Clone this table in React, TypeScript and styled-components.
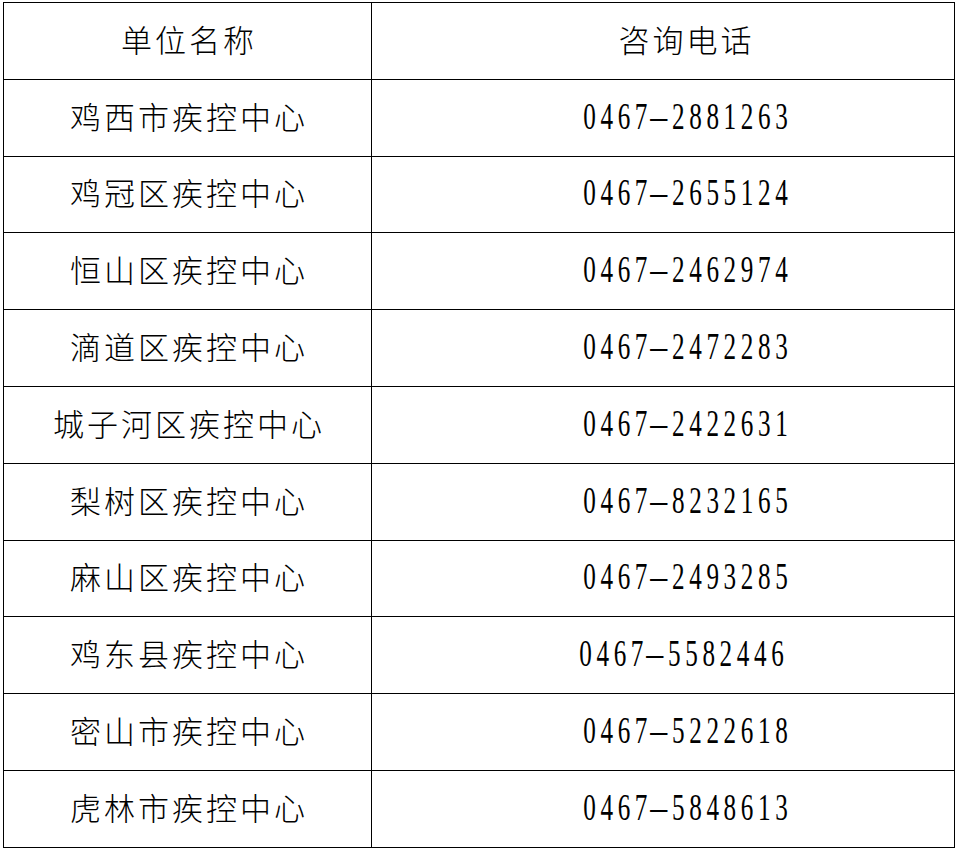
import styled, { createGlobalStyle } from "styled-components";

const GlobalStyle = createGlobalStyle`
  html, body {
    margin: 0;
    padding: 0;
    background: #ffffff;
  }
`;

const Page = styled.div`
  padding: 2px 0 0 3px;
`;

const Table = styled.table`
  border-collapse: collapse;
  width: 951px;
  table-layout: fixed;
`;

const Row = styled.tr`
  height: 76.8px;
`;

const Cell = styled.td<{ $indent?: number }>`
  border: 1px solid #000;
  padding: 0 0 3px ${(props) => props.$indent ?? 0}px;
  text-align: center;
  vertical-align: middle;
  color: #000;
`;

const Name = styled.span`
  font-family: "Noto Sans CJK SC", "Noto Sans", sans-serif;
  font-weight: 300;
  font-size: 31px;
  letter-spacing: 3px;
  line-height: 1;
  margin-right: -3px;
`;

const Phone = styled.span`
  display: inline-block;
  font-family: "Liberation Serif", "Times New Roman", serif;
  font-size: 37px;
  letter-spacing: 6.8px;
  line-height: 1;
  transform: scaleX(0.68);
  margin-right: -6.8px;
`;

const Dash = styled.span`
  display: inline-block;
  transform: scaleX(1.35);
  margin: 0 2px;
`;

interface Center {
  name: string;
  phone: string;
  indent?: number;
}

const centers: Center[] = [
  { name: "鸡西市疾控中心", phone: "0467-2881263" },
  { name: "鸡冠区疾控中心", phone: "0467-2655124" },
  { name: "恒山区疾控中心", phone: "0467-2462974" },
  { name: "滴道区疾控中心", phone: "0467-2472283" },
  { name: "城子河区疾控中心", phone: "0467-2422631" },
  { name: "梨树区疾控中心", phone: "0467-8232165" },
  { name: "麻山区疾控中心", phone: "0467-2493285" },
  { name: "鸡东县疾控中心", phone: "0467-5582446", indent: 34 },
  { name: "密山市疾控中心", phone: "0467-5222618" },
  { name: "虎林市疾控中心", phone: "0467-5848613" },
];

function PhoneNumber({ value }: { value: string }) {
  const [area, local] = value.split("-");
  return (
    <Phone>
      {area}
      <Dash>–</Dash>
      {local}
    </Phone>
  );
}

function App() {
  return (
    <Page>
      <GlobalStyle />
      <Table>
        <colgroup>
          <col style={{ width: 368 }} />
          <col style={{ width: 583 }} />
        </colgroup>
        <tbody>
          <Row>
            <Cell>
              <Name>单位名称</Name>
            </Cell>
            <Cell $indent={44}>
              <Name>咨询电话</Name>
            </Cell>
          </Row>
          {centers.map((c) => (
            <Row key={c.name}>
              <Cell>
                <Name>{c.name}</Name>
              </Cell>
              <Cell $indent={c.indent ?? 42}>
                <PhoneNumber value={c.phone} />
              </Cell>
            </Row>
          ))}
        </tbody>
      </Table>
    </Page>
  );
}

export default App;
